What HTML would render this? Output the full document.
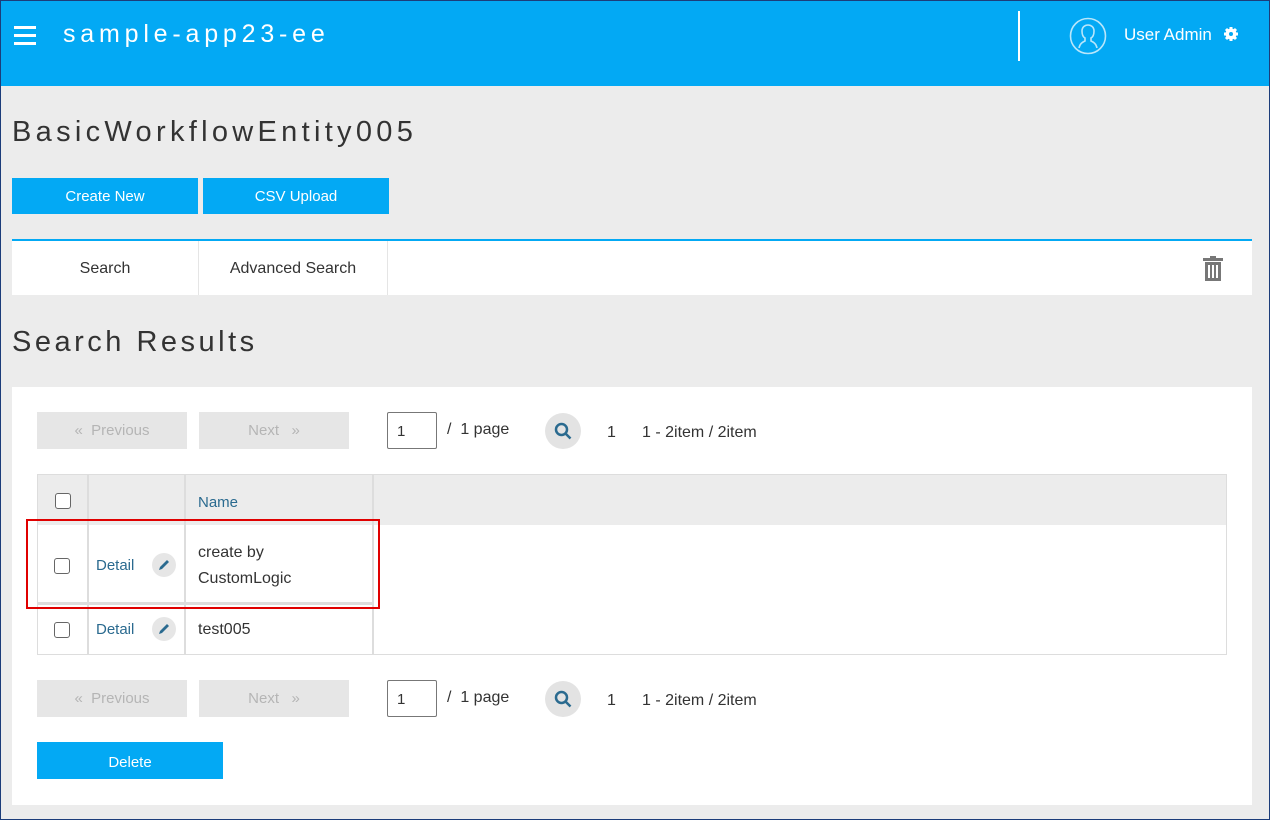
<!DOCTYPE html>
<html><head><style>
*{box-sizing:border-box;margin:0;padding:0}
body{width:1270px;height:820px;background:#ececec;font-family:"Liberation Sans",sans-serif;position:relative;overflow:hidden}
.abs{position:absolute}
.hdr{left:0;top:0;width:1270px;height:86px;background:#03a9f4}
.btn{background:#03a9f4;color:#fff;font-size:15px;text-align:center}
.pg{background:#e6e6e6;color:#b5b5b5;font-size:15px;text-align:center;line-height:38px}
.inp{background:#fff;border:1px solid #777;border-radius:2px;font-size:15px;padding-left:9px;line-height:37px;color:#333}
.txt{font-size:16px;color:#333}
.srch{width:36px;height:36px;border-radius:50%;background:#e3e3e3}
.cb{width:16px;height:16px;border:1.5px solid #666;border-radius:3px;background:#fff}
.pen{width:24px;height:24px;border-radius:50%;background:#e6e6e6}
.det{color:#2a6a8f;font-size:15px}
</style></head><body>
<div class="abs hdr"></div>
<div class="abs" style="left:14px;top:26px;width:22px;height:3px;background:#fff;box-shadow:0 8px 0 #fff,0 16px 0 #fff"></div>
<div class="abs" style="left:63px;top:20px;color:#fff;font-size:25px;letter-spacing:4.8px">sample-app23-ee</div>
<div class="abs" style="left:1018px;top:11px;width:2px;height:50px;background:#fff"></div>
<svg class="abs" style="left:1069px;top:17px" width="38" height="38" viewBox="0 0 38 38" fill="none" stroke="#b8e6fb" stroke-width="1.6"><circle cx="19" cy="19" r="17.5"/><path d="M10 31c1-5 4-6 6-7v-3c-2-1-3-4-3-7 0-4 3-6 6-6s6 2 6 6c0 3-1 6-3 7v3c2 1 5 2 6 7"/></svg>
<div class="abs" style="left:1124px;top:25px;color:#fff;font-size:17px">User Admin</div>
<svg class="abs" style="left:1223px;top:26px" width="16" height="16" viewBox="0 0 16 16"><circle cx="8" cy="8" r="5.5" fill="#fff"/><g stroke="#fff" stroke-width="3"><path d="M8 1v14M1 8h14M3 3l10 10M13 3L3 13"/></g><circle cx="8" cy="8" r="2" fill="#03a9f4"/></svg>

<div class="abs" style="left:12px;top:116px;font-size:29px;color:#333;letter-spacing:4.3px">BasicWorkflowEntity005</div>
<div class="abs btn" style="left:12px;top:178px;width:186px;height:36px;line-height:38px">Create New</div>
<div class="abs btn" style="left:203px;top:178px;width:186px;height:36px;line-height:38px">CSV Upload</div>

<div class="abs" style="left:12px;top:239px;width:1240px;height:56px;background:#fff;border-top:2px solid #03a9f4"></div>
<div class="abs txt" style="left:12px;top:241px;width:187px;height:54px;line-height:56px;text-align:center;border-right:1px solid #e5e5e5">Search</div>
<div class="abs txt" style="left:199px;top:241px;width:189px;height:54px;line-height:56px;text-align:center;border-right:1px solid #e5e5e5">Advanced Search</div>
<svg class="abs" style="left:1203px;top:256px" width="20" height="25" viewBox="0 0 20 25" fill="#777"><rect x="0" y="2" width="20" height="3"/><rect x="7" y="0" width="6" height="3"/><path d="M2 6h16v19H2z"/><g fill="#fff"><rect x="5" y="9" width="2" height="13"/><rect x="9" y="9" width="2" height="13"/><rect x="13" y="9" width="2" height="13"/></g></svg>

<div class="abs" style="left:12px;top:326px;font-size:29px;color:#333;letter-spacing:3.5px">Search Results</div>
<div class="abs" style="left:12px;top:387px;width:1240px;height:418px;background:#fff"></div>

<div class="abs pg" style="left:37px;top:412px;width:150px;height:37px">«&nbsp;&nbsp;Previous</div>
<div class="abs pg" style="left:199px;top:412px;width:150px;height:37px">Next&nbsp;&nbsp;&nbsp;»</div>
<div class="abs inp" style="left:387px;top:412px;width:50px;height:37px">1</div>
<div class="abs txt" style="left:447px;top:421px">/&nbsp;&nbsp;1 page</div>
<div class="abs srch" style="left:545px;top:413px"></div>
<svg class="abs" style="left:554px;top:422px" width="18" height="18" viewBox="0 0 18 18" fill="none" stroke="#2a6a8f" stroke-width="2.5"><circle cx="7.5" cy="7.5" r="5.5"/><path d="M11.5 11.5l5 5"/></svg>
<div class="abs txt" style="left:607px;top:424px">1</div>
<div class="abs txt" style="left:642px;top:424px">1 - 2item / 2item</div>

<div class="abs" style="left:37px;top:474px;width:1190px;height:181px;border:1px solid #ddd"></div>
<div class="abs" style="left:38px;top:475px;width:1188px;height:50px;background:#ececec"></div>
<div class="abs" style="left:87px;top:475px;width:2px;height:179px;background:#ddd"></div>
<div class="abs" style="left:184px;top:475px;width:2px;height:179px;background:#ddd"></div>
<div class="abs" style="left:372px;top:475px;width:2px;height:179px;background:#ddd"></div>
<div class="abs" style="left:38px;top:602px;width:336px;height:3px;background:#ddd"></div>
<div class="abs cb" style="left:55px;top:493px"></div>
<div class="abs" style="left:198px;top:494px;color:#2a6a8f;font-size:15px">Name</div>

<div class="abs cb" style="left:54px;top:558px"></div>
<div class="abs det" style="left:96px;top:557px">Detail</div>
<div class="abs pen" style="left:152px;top:553px"></div>
<svg class="abs" style="left:157px;top:558px" width="14" height="14" viewBox="0 0 14 14"><path d="M2 12l1-3 7-7 2 2-7 7z" fill="#2a6a8f"/></svg>
<div class="abs txt" style="left:198px;top:540px;line-height:26px">create by<br>CustomLogic</div>

<div class="abs cb" style="left:54px;top:622px"></div>
<div class="abs det" style="left:96px;top:621px">Detail</div>
<div class="abs pen" style="left:152px;top:617px"></div>
<svg class="abs" style="left:157px;top:622px" width="14" height="14" viewBox="0 0 14 14"><path d="M2 12l1-3 7-7 2 2-7 7z" fill="#2a6a8f"/></svg>
<div class="abs txt" style="left:198px;top:621px">test005</div>

<div class="abs" style="left:26px;top:519px;width:354px;height:90px;border:2px solid #e00000"></div>

<div class="abs pg" style="left:37px;top:680px;width:150px;height:37px">«&nbsp;&nbsp;Previous</div>
<div class="abs pg" style="left:199px;top:680px;width:150px;height:37px">Next&nbsp;&nbsp;&nbsp;»</div>
<div class="abs inp" style="left:387px;top:680px;width:50px;height:37px">1</div>
<div class="abs txt" style="left:447px;top:689px">/&nbsp;&nbsp;1 page</div>
<div class="abs srch" style="left:545px;top:681px"></div>
<svg class="abs" style="left:554px;top:690px" width="18" height="18" viewBox="0 0 18 18" fill="none" stroke="#2a6a8f" stroke-width="2.5"><circle cx="7.5" cy="7.5" r="5.5"/><path d="M11.5 11.5l5 5"/></svg>
<div class="abs txt" style="left:607px;top:692px">1</div>
<div class="abs txt" style="left:642px;top:692px">1 - 2item / 2item</div>

<div class="abs btn" style="left:37px;top:742px;width:186px;height:37px;line-height:41px">Delete</div>
<div class="abs" style="left:0;top:0;width:1270px;height:820px;border:1px solid #1c3d7a"></div>
</body></html>
